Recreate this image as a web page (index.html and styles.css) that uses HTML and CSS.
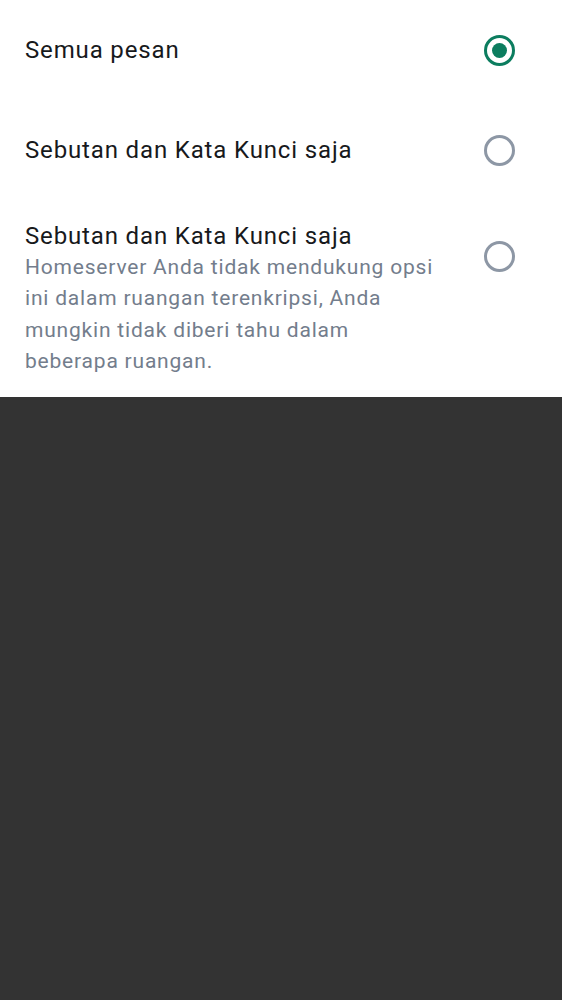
FILE: index.html
```html
<!DOCTYPE html>
<html lang="id">
<head>
<meta charset="utf-8">
<link rel="stylesheet" href="styles.css">
</head>
<body>
<div class="panel">
  <div class="row single">
    <div class="text"><div class="title">Semua pesan</div></div>
    <span class="radio checked"></span>
  </div>
  <div class="row single">
    <div class="text"><div class="title">Sebutan dan Kata Kunci saja</div></div>
    <span class="radio"></span>
  </div>
  <div class="row multi">
    <div class="text">
      <div class="title">Sebutan dan Kata Kunci saja</div>
      <div class="desc">Homeserver Anda tidak mendukung opsi ini dalam ruangan terenkripsi, Anda mungkin tidak diberi tahu dalam beberapa ruangan.</div>
    </div>
    <span class="radio top"></span>
  </div>
</div>
</body>
</html>
```
FILE: styles.css
```css
html, body {
  margin: 0;
  padding: 0;
  background: #333333;
  font-family: Roboto, "Liberation Sans", sans-serif;
}
.panel {
  background: #ffffff;
  height: 397px;
}
.row {
  display: flex;
  align-items: center;
  padding: 0 47px 0 25px;
  box-sizing: border-box;
}
.row.single {
  height: 100px;
}
.row.multi {
  align-items: flex-start;
  padding-top: 21px;
}
.text {
  flex: 1;
}
.title {
  font-size: 24px;
  line-height: 30px;
  color: #17191c;
  letter-spacing: 0.85px;
}
.desc {
  font-size: 21px;
  line-height: 31.3px;
  color: #737d8c;
  width: 420px;
  letter-spacing: 0.8px;
  margin-top: 1px;
}
.radio {
  width: 31px;
  height: 31px;
  box-sizing: border-box;
  border: 3px solid #8d97a5;
  border-radius: 50%;
  flex: none;
  position: relative;
}
.radio.checked {
  border-color: #0c7d5f;
}
.radio.checked::after {
  content: "";
  position: absolute;
  left: 50%;
  top: 50%;
  width: 15px;
  height: 15px;
  margin: -7.5px 0 0 -7.5px;
  border-radius: 50%;
  background: #0c7d5f;
}
.radio.top {
  margin-top: 20px;
}
```
